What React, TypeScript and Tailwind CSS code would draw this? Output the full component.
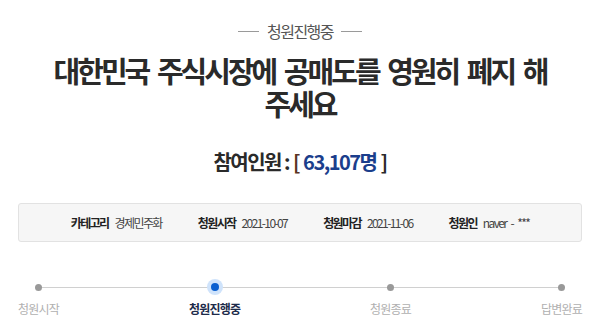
import React from "react";

const FONT = { fontFamily: '"Noto Sans CJK KR", "Noto Sans", sans-serif' };

function Step({ label, active }: { label: string; active?: boolean }) {
  return (
    <div className="flex flex-col items-center">
      <div className="h-[16px] flex items-center justify-center">
        {active ? (
          <div className="w-[16px] h-[16px] rounded-full bg-[#cfe3fb] flex items-center justify-center">
            <div className="w-[8px] h-[8px] rounded-full bg-[#0a5fd0]" />
          </div>
        ) : (
          <div className="w-[7px] h-[7px] rounded-full bg-[#999999]" />
        )}
      </div>
      <div
        className={
          "mt-[6px] text-[12px] tracking-[-0.8px] leading-[16px] " +
          (active ? "font-bold text-[#1d2b4a]" : "text-[#b0b0b0]")
        }
      >
        {label}
      </div>
    </div>
  );
}

export default function App() {
  return (
    <div className="w-[600px] h-[334px] bg-white overflow-hidden" style={FONT}>
      <div className="pt-[21px] flex items-center justify-center gap-[8px]">
        <div className="w-[21px] h-px bg-[#9a9a9a]" />
        <span className="text-[16px] leading-[20px] tracking-[-1.5px] text-[#555555]">청원진행중</span>
        <div className="w-[21px] h-px bg-[#9a9a9a]" />
      </div>
      <h1 className="mt-[13px] text-center text-[29px] font-bold leading-[33px] tracking-[-3px] [word-spacing:5px] text-[#2a2a2a]">
        <span className="block">대한민국 주식시장에 공매도를 영원히 폐지 해</span>
        <span className="block">주세요</span>
      </h1>
      <div className="mt-[29px] flex justify-center items-center text-[20px] font-bold leading-[26px] tracking-[-1.5px] text-[#2a2a2a]">
        <span>참여인원</span>
        <span className="ml-[3px]">:</span>
        <span className="ml-[4px] text-[#5a3324]">[</span>
        <span className="ml-[4px] text-[#1b3e8c]">63,107명</span>
        <span className="ml-[4px]">]</span>
      </div>
      <div className="mt-[28px] mx-[18px] h-[39px] bg-[#f6f6f6] border border-[#e2e2e2] rounded-[3px] flex items-center justify-center gap-[36px] text-[12px] tracking-[-1.6px] text-[#444444]">
        <div className="flex items-center gap-[6px]">
          <span className="font-bold text-[#222222]">카테고리</span>
          <span>경제민주화</span>
        </div>
        <div className="flex items-center gap-[6px]">
          <span className="font-bold text-[#222222]">청원시작</span>
          <span>2021-10-07</span>
        </div>
        <div className="flex items-center gap-[6px]">
          <span className="font-bold text-[#222222]">청원마감</span>
          <span>2021-11-06</span>
        </div>
        <div className="flex items-center gap-[6px]">
          <span className="font-bold text-[#222222]">청원인</span>
          <span className="[word-spacing:3px]">naver - ***</span>
        </div>
      </div>
      <div className="relative mt-[37px] mx-[18px]">
        <div className="absolute left-[18px] right-[18px] top-[8px] h-px bg-[#d0d0d0]" />
        <div className="relative flex justify-between">
          <Step label="청원시작" />
          <Step label="청원진행중" active />
          <Step label="청원종료" />
          <Step label="답변완료" />
        </div>
      </div>
    </div>
  );
}
